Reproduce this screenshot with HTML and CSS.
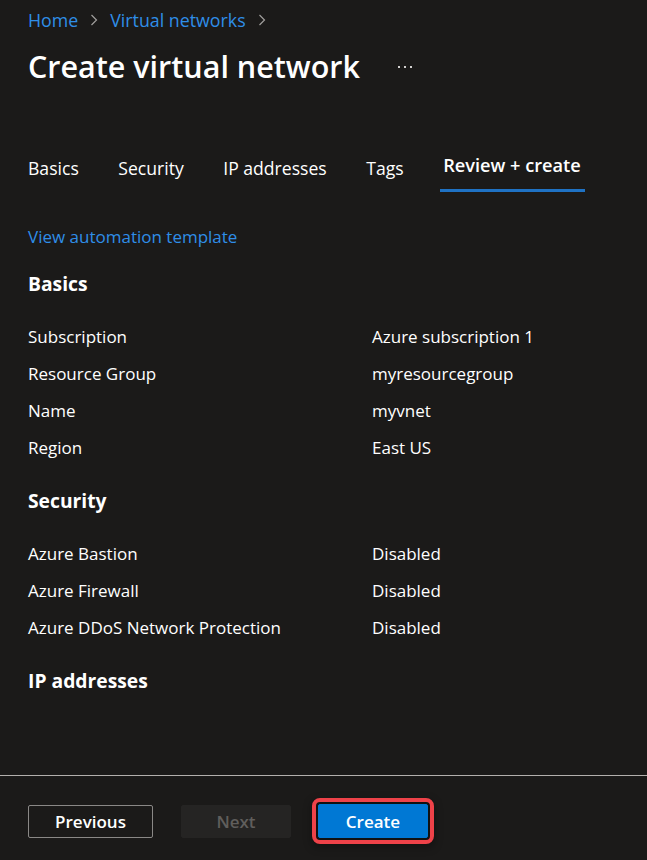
FILE: index.html
```html
<!DOCTYPE html>
<html lang="en">
<head>
<meta charset="utf-8">
<title>Create virtual network</title>
<link rel="stylesheet" href="styles.css">
</head>
<body>
<div class="page">
  <main class="main">
    <nav class="breadcrumb">
      <a class="crumb" href="#">Home</a>
      <svg class="chev" width="8" height="12" viewBox="0 0 8 12"><path d="M1.5 1 L6.5 6 L1.5 11" fill="none" stroke="#a19f9d" stroke-width="1.2"/></svg>
      <a class="crumb" href="#">Virtual networks</a>
      <svg class="chev" width="8" height="12" viewBox="0 0 8 12"><path d="M1.5 1 L6.5 6 L1.5 11" fill="none" stroke="#a19f9d" stroke-width="1.2"/></svg>
    </nav>
    <div class="title-row">
      <h1 class="title">Create virtual network</h1>
      <svg class="more" width="14" height="4" viewBox="0 0 14 4"><rect x="0" y="1" width="2" height="2" fill="#d2d0ce"/><rect x="6" y="1" width="2" height="2" fill="#d2d0ce"/><rect x="12" y="1" width="2" height="2" fill="#d2d0ce"/></svg>
    </div>
    <div class="tabs">
      <div class="tab">Basics</div>
      <div class="tab">Security</div>
      <div class="tab">IP addresses</div>
      <div class="tab">Tags</div>
      <div class="tab active">Review + create</div>
    </div>
    <a class="link" href="#">View automation template</a>
    <section class="section">
      <h2 class="heading">Basics</h2>
      <div class="row"><span class="label">Subscription</span><span class="value">Azure subscription 1</span></div>
      <div class="row"><span class="label">Resource Group</span><span class="value">myresourcegroup</span></div>
      <div class="row"><span class="label">Name</span><span class="value">myvnet</span></div>
      <div class="row"><span class="label">Region</span><span class="value">East US</span></div>
    </section>
    <section class="section">
      <h2 class="heading">Security</h2>
      <div class="row"><span class="label">Azure Bastion</span><span class="value">Disabled</span></div>
      <div class="row"><span class="label">Azure Firewall</span><span class="value">Disabled</span></div>
      <div class="row"><span class="label">Azure DDoS Network Protection</span><span class="value">Disabled</span></div>
    </section>
    <section class="section">
      <h2 class="heading">IP addresses</h2>
    </section>
  </main>
  <footer class="footer">
    <button class="btn btn-secondary">Previous</button>
    <button class="btn btn-disabled">Next</button>
    <button class="btn btn-primary">Create</button>
  </footer>
</div>
</body>
</html>
```
FILE: styles.css
```css
* { box-sizing: border-box; }
html, body {
  margin: 0;
  padding: 0;
  background: #1b1a19;
}
body {
  font-family: "Open Sans", "Noto Sans", sans-serif;
  font-size: 17px;
  color: #ffffff;
}
.page {
  min-height: 100vh;
  display: flex;
  flex-direction: column;
}
.main {
  flex: 1;
  padding: 0 28px;
}
.breadcrumb {
  display: flex;
  align-items: center;
  height: 24px;
  margin-top: 8px;
  gap: 12px;
}
.crumb {
  color: #2f8ee8;
  text-decoration: none;
  line-height: 24px;
  font-size: 17.8px;
}
.chev { display: block; }
.title-row {
  display: flex;
  align-items: center;
  height: 40px;
  margin-top: 14px;
}
.title {
  margin: 0;
  font-size: 30.5px;
  font-weight: 600;
  line-height: 40px;
}
.more {
  margin-left: 38px;
  margin-top: 2px;
}
.tabs {
  display: flex;
  gap: 39.5px;
  margin-top: 62px;
  font-size: 17.6px;
}
.tab {
  height: 44px;
  padding-top: 8px;
  line-height: 24px;
  border-bottom: 3px solid transparent;
}
.tab.active {
  font-weight: 600;
  font-size: 18.2px;
  border-bottom: 3px solid #1f72c4;
  margin-left: -3px;
  padding: 5px 4px 0 3px;
}
.link {
  display: block;
  width: max-content;
  margin-top: 33px;
  line-height: 24px;
  color: #2f8ee8;
  text-decoration: none;
}
.section { margin-top: 21px; }
.heading {
  margin: 0 0 20px;
  font-size: 19.3px;
  font-weight: 700;
  line-height: 28px;
}
.row {
  display: grid;
  grid-template-columns: 344px 1fr;
  height: 37px;
  align-items: center;
  line-height: 24px;
}
.footer {
  border-top: 1px solid #b3b0ad;
  padding: 28px 28px 22px;
  display: flex;
  gap: 28px;
  align-items: center;
}
.btn {
  font-family: inherit;
  font-size: 17px;
  font-weight: 600;
  height: 33px;
  border-radius: 2px;
  padding: 0;
  line-height: 31px;
}
.btn-secondary {
  width: 125px;
  background: transparent;
  border: 1px solid #8a8886;
  color: #ffffff;
}
.btn-disabled {
  width: 110px;
  background: #252423;
  border: 1px solid #252423;
  color: #605e5c;
}
.btn-primary {
  width: 110px;
  height: 34px;
  background: #0078d4;
  border: 1px solid #0078d4;
  color: #ffffff;
  margin-left: -1px;
  outline: 4px solid #ee4249;
  outline-offset: 2px;
  box-shadow: 0 0 0 2px #111, 0 3px 8px 6px rgba(0,0,0,0.35);
}
```
